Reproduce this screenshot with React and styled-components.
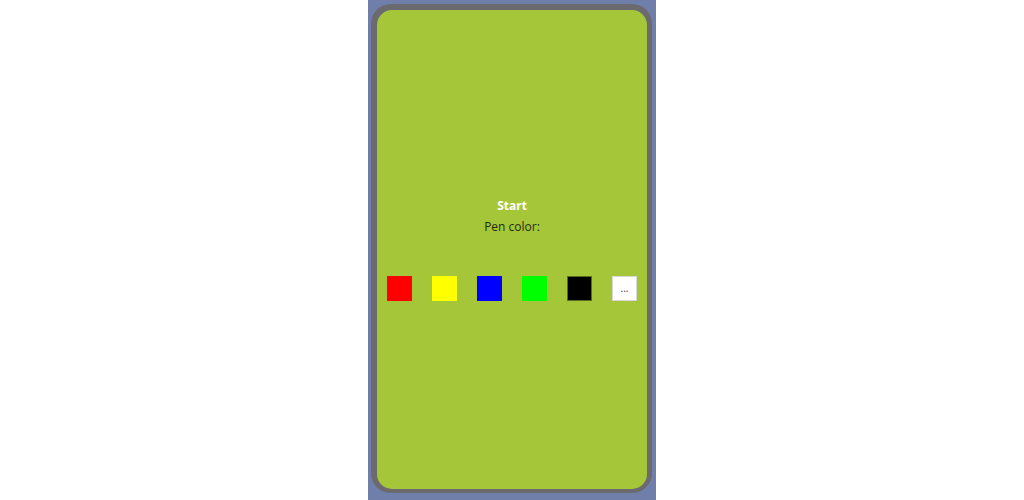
import React from "react";
import styled, { createGlobalStyle } from "styled-components";

const Global = createGlobalStyle`
  html, body {
    margin: 0;
    padding: 0;
    background: #ffffff;
    font-family: "Open Sans", "Noto Sans", sans-serif;
  }
`;

const Page = styled.div`
  width: 1024px;
  height: 500px;
  display: flex;
  justify-content: center;
`;

const Shell = styled.div`
  width: 288px;
  height: 500px;
  box-sizing: border-box;
  background: #6f7fa9;
  padding: 4px 4px 7px 3px;
`;

const Frame = styled.div`
  height: 100%;
  box-sizing: border-box;
  background: #6a6a6f;
  border-radius: 20px;
  padding: 6px 5px 4px 6px;
`;

const Screen = styled.div`
  height: 100%;
  background: #a6c63a;
  border-radius: 15px;
  display: flex;
  flex-direction: column;
  align-items: center;
  justify-content: center;
`;

const Title = styled.div`
  color: #ffffff;
  font-weight: 700;
  font-size: 12px;
  line-height: 17px;
`;

const Label = styled.div`
  color: #1f2a10;
  font-size: 12px;
  line-height: 17px;
  margin-top: 4px;
`;

const Swatches = styled.div`
  display: flex;
  gap: 20px;
  margin-top: 41px;
  margin-bottom: 2px;
`;

const Swatch = styled.button`
  width: 25px;
  height: 25px;
  padding: 0;
  box-sizing: border-box;
  background: ${(p) => p.$color};
  border: 1px solid ${(p) => p.$border || p.$color};
  font-family: inherit;
  font-size: 10px;
  line-height: 20px;
  color: #333;
  cursor: pointer;
`;

const colors = [
  { c: "#ff0000" },
  { c: "#ffff00" },
  { c: "#0000ff" },
  { c: "#00ff00" },
  { c: "#000000", b: "#5a6a20" },
];

export default function App() {
  return (
    <Page>
      <Global />
      <Shell>
        <Frame>
          <Screen>
            <Title>Start</Title>
            <Label>Pen color:</Label>
            <Swatches>
              {colors.map((s) => (
                <Swatch key={s.c} $color={s.c} $border={s.b} />
              ))}
              <Swatch $color="#ffffff" $border="#d8d8d8">...</Swatch>
            </Swatches>
          </Screen>
        </Frame>
      </Shell>
    </Page>
  );
}
